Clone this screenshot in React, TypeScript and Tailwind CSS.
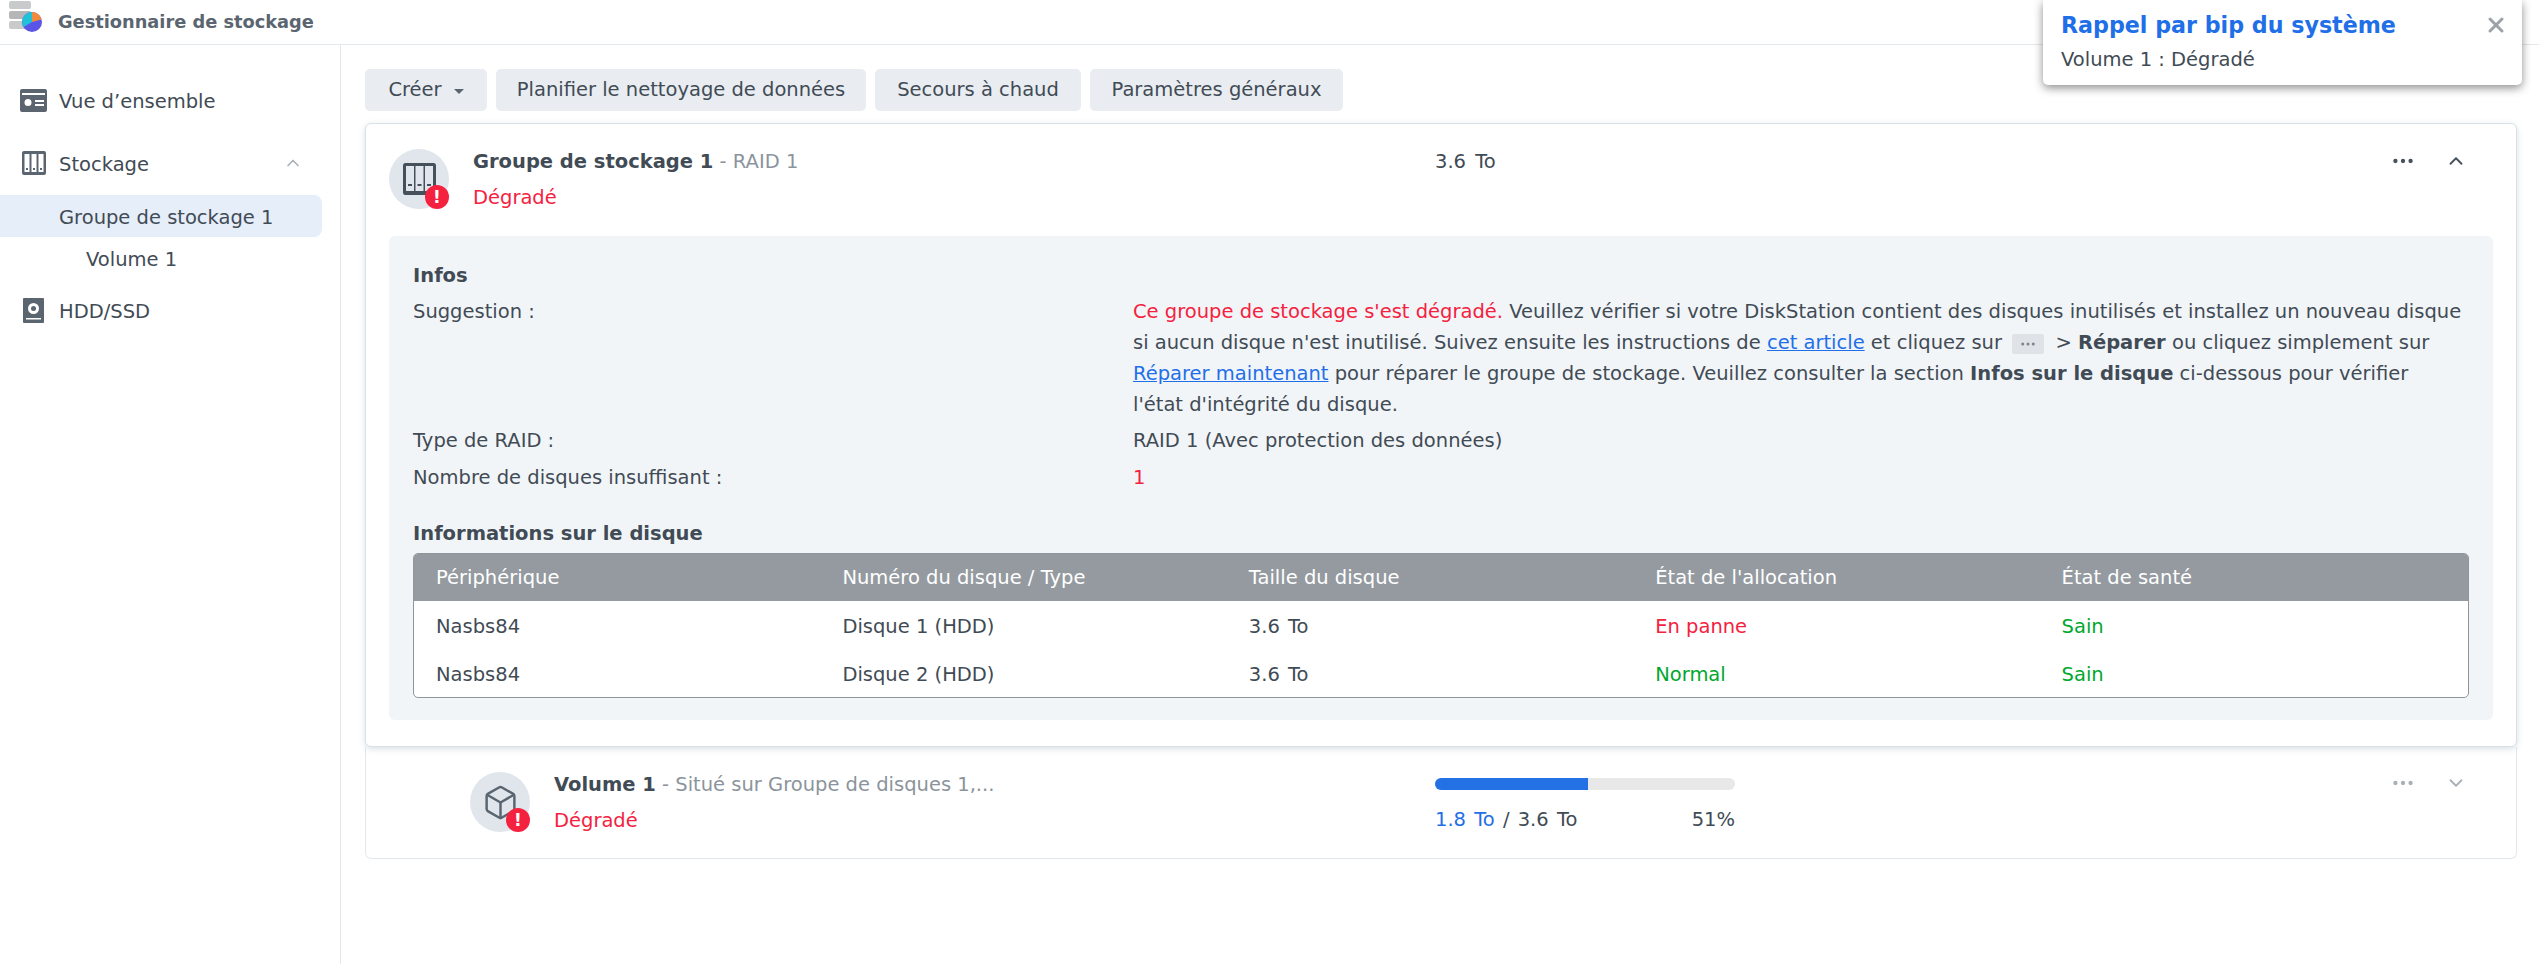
import { Box, ChevronDown, ChevronUp, Ellipsis, X } from 'lucide-react';
import type { ReactNode } from 'react';

const RED = 'text-[#f4223f]';
const BLUE = 'text-[#1f6fe8]';

// ─── Icons ────────────────────────────────────────────────────────────────────

function AppLogo() {
  return (
    <svg width="36" height="34" viewBox="0 0 36 34" className="shrink-0 self-start">
      <rect x="1" y="1" width="22" height="8" rx="2" fill="#c8cacc" />
      <rect x="1" y="11" width="22" height="8" rx="2" fill="#b4b6b8" />
      <rect x="1" y="21" width="22" height="8" rx="2" fill="#c8cacc" />
      <circle cx="24" cy="22" r="10" fill="#5a55e8" />
      <path d="M24 22 L24 12 A10 10 0 0 1 33.6 19.5 Z" fill="#f08a3c" />
      <path d="M24 22 L15.500 27 A10 10 0 0 1 24 12 Z" fill="#1fc0d8" />
    </svg>
  );
}

function OverviewIcon() {
  return (
    <svg width="27" height="23" viewBox="0 0 27 23">
      <path
        fillRule="evenodd"
        d="M2 0h23a2 2 0 0 1 2 2v19a2 2 0 0 1-2 2H2a2 2 0 0 1-2-2V2a2 2 0 0 1 2-2ZM2 4v2h23V4H2Zm6 6a3.5 3.5 0 1 0 0 7 3.5 3.5 0 0 0 0-7Zm7 1v2h9v-2h-9Zm0 4v2h9v-2h-9Z"
        fill="#5a6570"
      />
    </svg>
  );
}

function StorageIcon({ size = 24, color = '#5a6570' }: { size?: number; color?: string }) {
  return (
    <svg width={size} height={size} viewBox="0 0 24 24">
      <rect x="0" y="0" width="24" height="24" rx="2" fill={color} />
      <rect x="2.5" y="3" width="5" height="18" fill="#fff" />
      <rect x="9.5" y="3" width="5" height="18" fill="#fff" />
      <rect x="16.5" y="3" width="5" height="18" fill="#fff" />
      <rect x="4" y="17" width="2" height="2" fill={color} />
      <rect x="11" y="17" width="2" height="2" fill={color} />
      <rect x="18" y="17" width="2" height="2" fill={color} />
    </svg>
  );
}

function PoolIcon() {
  return (
    <svg width="33" height="32" viewBox="0 0 33 32">
      <rect x="0" y="0" width="33" height="32" rx="2.5" fill="#46505a" />
      <rect x="3" y="3" width="8" height="25" fill="#e1e6ec" />
      <rect x="12.5" y="3" width="8" height="25" fill="#e1e6ec" />
      <rect x="22" y="3" width="8" height="25" fill="#e1e6ec" />
      <rect x="5" y="21" width="4" height="2" fill="#46505a" />
      <rect x="14.5" y="21" width="4" height="2" fill="#46505a" />
      <rect x="24" y="21" width="4" height="2" fill="#46505a" />
    </svg>
  );
}

function DiskIcon() {
  return (
    <svg width="21" height="25" viewBox="0 0 21 25">
      <path
        fillRule="evenodd"
        d="M1 0h19a1 1 0 0 1 1 1v23a1 1 0 0 1-1 1H1a1 1 0 0 1-1-1V1a1 1 0 0 1 1-1Zm9.5 5a5.5 5.5 0 1 0 0 11 5.5 5.5 0 0 0 0-11ZM3 20v1.500h15V20H3Z"
        fill="#5a6570"
      />
      <circle cx="10.500" cy="10.500" r="2.500" fill="#5a6570" />
    </svg>
  );
}

function AlertBadge() {
  return (
    <span className="absolute right-0 bottom-0 flex h-6 w-6 items-center justify-center rounded-full bg-[#f4223f] text-[17px] font-bold leading-none text-white">
      !
    </span>
  );
}

function StatusIcon({ children }: { children: ReactNode }) {
  return (
    <div className="relative flex h-[60px] w-[60px] shrink-0 items-center justify-center rounded-full bg-[#e1e6ec]">
      {children}
      <AlertBadge />
    </div>
  );
}

// ─── Sidebar ──────────────────────────────────────────────────────────────────

function Sidebar() {
  return (
    <aside className="h-full w-[341px] shrink-0 border-r border-[#e3e8ed] pt-[34px] pr-[18px]">
      <div className="flex h-[42px] items-center">
        <div className="flex w-[59px] justify-end pr-[12px]">
          <OverviewIcon />
        </div>
        <span className="pt-[3px]">Vue d’ensemble</span>
      </div>
      <div className="mt-[21px] flex h-[42px] items-center">
        <div className="flex w-[59px] justify-end pr-[13px]">
          <StorageIcon />
        </div>
        <span className="flex-1 pt-[3px]">Stockage</span>
        <ChevronUp size={20} className="mr-[19px] text-[#a9b0b7]" />
      </div>
      <div className="mt-[11px] flex h-[42px] items-center rounded-r-lg bg-[#e6eefa] pt-[3px] pl-[59px]">Groupe de stockage 1</div>
      <div className="flex h-[42px] items-center pt-[3px] pl-[86px]">Volume 1</div>
      <div className="mt-[10px] flex h-[42px] items-center">
        <div className="flex w-[59px] justify-end pr-[15px]">
          <DiskIcon />
        </div>
        <span className="pt-[3px]">HDD/SSD</span>
      </div>
    </aside>
  );
}

// ─── Main content ─────────────────────────────────────────────────────────────

function ToolButton({ children, width }: { children: ReactNode; width: string }) {
  return (
    <button className={`flex h-[42px] items-center justify-center rounded-[5px] bg-[#e9edf1] ${width}`}>{children}</button>
  );
}

function InfoRow({ label, children, className }: { label: string; children: ReactNode; className?: string }) {
  return (
    <div className={`flex leading-[31px] ${className ?? ''}`}>
      <div className="w-[720px] shrink-0">{label}</div>
      <div className="flex-1 pr-[5px]">{children}</div>
    </div>
  );
}

const DISKS = [
  { device: 'Nasbs84', disk: 'Disque 1 (HDD)', size: '3.6 To', alloc: 'En panne', allocColor: RED },
  { device: 'Nasbs84', disk: 'Disque 2 (HDD)', size: '3.6 To', alloc: 'Normal', allocColor: 'text-[#00a82d]' },
];

function DiskTable() {
  return (
    <div className="mt-[4px] overflow-hidden rounded-[5px] border border-[#8e959b] bg-white">
      <div className="grid h-[47px] grid-cols-5 items-center bg-[#949a9f] pl-[22px] text-white">
        <span>Périphérique</span>
        <span>Numéro du disque / Type</span>
        <span>Taille du disque</span>
        <span>État de l'allocation</span>
        <span>État de santé</span>
      </div>
      {DISKS.map((d) => (
        <div key={d.disk} className="grid h-[48px] grid-cols-5 items-center pt-[3px] pl-[22px]">
          <span>{d.device}</span>
          <span>{d.disk}</span>
          <span className="[word-spacing:2px]">{d.size}</span>
          <span className={d.allocColor}>{d.alloc}</span>
          <span className="text-[#00a82d]">Sain</span>
        </div>
      ))}
    </div>
  );
}

function PoolCard() {
  return (
    <section className="relative z-10 h-[624px] rounded-[6px] border border-[#d9e1e8] bg-white px-[23px] pt-[25px] shadow-[0_2px_6px_rgba(130,150,170,0.3)]">
      <div className="flex h-[60px]">
        <StatusIcon>
          <PoolIcon />
        </StatusIcon>
        <div className="ml-6 w-[962px] shrink-0">
          <div className="leading-[26px]">
            <span className="font-bold">Groupe de stockage 1</span>
            <span className="text-[#8b949c]"> - RAID 1</span>
          </div>
          <div className={`mt-[10px] leading-[26px] ${RED}`}>Dégradé</div>
        </div>
        <div className="flex-1 leading-[26px] [word-spacing:3px]">3.6 To</div>
        <div className="flex h-[24px] items-center gap-[29px] pr-[26px] text-[#46505a]">
          <Ellipsis size={26} />
          <ChevronUp size={22} />
        </div>
      </div>
      <div className="mt-[27px] h-[484px] rounded-[6px] bg-[#f2f5f8] px-6 pt-[24px]">
        <div className="font-bold leading-[31px]">Infos</div>
        <InfoRow label="Suggestion :" className="mt-[5px]">
          <span className={RED}>Ce groupe de stockage s'est dégradé.</span> Veuillez vérifier si votre DiskStation contient des disques inutilisés et installez un nouveau disque si aucun disque n'est inutilisé. Suivez ensuite les instructions de{' '}
          <a className={`underline ${BLUE}`}>cet article</a> et cliquez sur{' '}
          <span className="mr-[5px] ml-[4px] inline-flex h-[20px] w-[32px] items-center justify-center rounded-[2px] bg-[#dfe3e7] align-middle text-[#7c858d]">
            <Ellipsis size={18} />
          </span>{' '}
          &gt; <b>Réparer</b> ou cliquez simplement sur <a className={`underline ${BLUE}`}>Réparer maintenant</a> pour réparer le groupe de stockage. Veuillez consulter la section <b>Infos sur le disque</b> ci-dessous pour vérifier l'état d'intégrité du disque.
        </InfoRow>
        <InfoRow label="Type de RAID :" className="mt-[5px]">RAID 1 (Avec protection des données)</InfoRow>
        <InfoRow label="Nombre de disques insuffisant :" className="mt-[6px]">
          <span className={RED}>1</span>
        </InfoRow>
        <div className="mt-[25px] font-bold leading-[31px]">Informations sur le disque</div>
        <DiskTable />
      </div>
    </section>
  );
}

function VolumeCard() {
  return (
    <section className="flex h-[112px] rounded-b-[6px] border border-t-0 border-[#e3e8ed] bg-white pt-[25px] pl-[104px]">
      <StatusIcon>
        <Box size={37} strokeWidth={1.6} className="text-[#5a6570]" />
      </StatusIcon>
      <div className="ml-6 w-[881px] shrink-0">
        <div className="leading-[26px]">
          <span className="font-bold">Volume 1</span>
          <span className="text-[#8b949c]"> - Situé sur Groupe de disques 1,...</span>
        </div>
        <div className={`mt-[10px] leading-[26px] ${RED}`}>Dégradé</div>
      </div>
      <div className="w-[300px] shrink-0 pt-[6px]">
        <div className="h-3 overflow-hidden rounded-full bg-[#e8e8e8]">
          <div className="h-full bg-[#2470e5]" style={{ width: '51%' }} />
        </div>
        <div className="mt-[17px] flex justify-between leading-[26px]">
          <span className="[word-spacing:2px]">
            <span className={BLUE}>1.8 To</span> / 3.6 To
          </span>
          <span>51%</span>
        </div>
      </div>
      <div className="ml-auto flex h-[22px] items-center gap-[29px] pr-[49px] text-[#a9b0b7]">
        <Ellipsis size={26} />
        <ChevronDown size={22} />
      </div>
    </section>
  );
}

function Toast() {
  return (
    <div className="absolute top-0 right-[17px] z-20 h-[85px] w-[479px] rounded-b-[5px] bg-white pt-[9px] pl-[18px] shadow-[0_3px_10px_rgba(0,0,0,0.45)]">
      <div className="text-[22.2px] font-bold leading-[32px] text-[#1f6fe8]">Rappel par bip du système</div>
      <div className="mt-[6px] leading-[26px]">Volume 1 : Dégradé</div>
      <X size={24} strokeWidth={3} className="absolute top-[13px] right-[14px] text-[#9ca2a8]" />
    </div>
  );
}

export default function App() {
  return (
    <div className="relative flex h-[964px] flex-col overflow-hidden bg-white font-['DejaVu_Sans',sans-serif] text-[19.5px] text-[#414b55]">
      <header className="flex h-[45px] shrink-0 items-center border-b border-[#e3e8ed] pl-2">
        <AppLogo />
        <span className="ml-[14px] text-[17.8px] font-bold text-[#5a6570]">Gestionnaire de stockage</span>
      </header>
      <div className="flex min-h-0 flex-1">
        <Sidebar />
        <main className="min-w-0 flex-1 pt-6 pr-[22px] pl-6">
          <div className="mb-3 flex gap-[9px]">
            <ToolButton width="w-[122px]">
              Créer <span className="ml-3 mt-[3px] border-x-[5px] border-t-[5px] border-x-transparent border-t-[#5a6570]" />
            </ToolButton>
            <ToolButton width="w-[370px]">Planifier le nettoyage de données</ToolButton>
            <ToolButton width="w-[206px]">Secours à chaud</ToolButton>
            <ToolButton width="w-[253px]">Paramètres généraux</ToolButton>
          </div>
          <PoolCard />
          <VolumeCard />
        </main>
      </div>
      <Toast />
    </div>
  );
}
